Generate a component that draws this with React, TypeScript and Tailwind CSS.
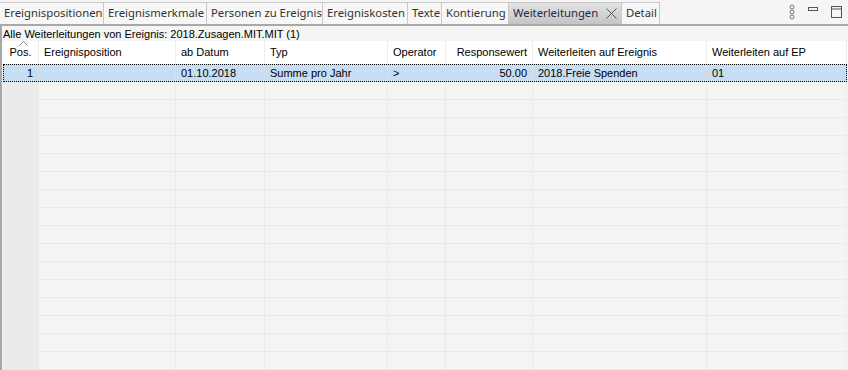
import React from 'react'

const tabs = [
  { label: 'Ereignispositionen', w: 104 },
  { label: 'Ereignismerkmale', w: 103 },
  { label: 'Personen zu Ereignis', w: 116 },
  { label: 'Ereigniskosten', w: 85 },
  { label: 'Texte', w: 34 },
  { label: 'Kontierung', w: 67 },
  { label: 'Weiterleitungen', w: 113, active: true },
  { label: 'Detail', w: 38 },
]

const cols = [
  { label: 'Pos.', w: 36, align: 'center' },
  { label: 'Ereignisposition', w: 137 },
  { label: 'ab Datum', w: 89 },
  { label: 'Typ', w: 123 },
  { label: 'Operator', w: 58 },
  { label: 'Responsewert', w: 87, align: 'right' },
  { label: 'Weiterleiten auf Ereignis', w: 174 },
  { label: 'Weiterleiten auf EP', w: 140 },
]

const row = ['1', '', '01.10.2018', 'Summe pro Jahr', '>', '50.00', '2018.Freie Spenden', '01']

export default function App() {
  return (
    <div className="w-[848px] h-[370px] overflow-hidden bg-[#f5f5f3] flex flex-col" style={{ fontFamily: '"Liberation Sans", Arial, sans-serif' }}>
      {/* tab bar */}
      <div className="h-[24px] bg-[#f5f5f5] flex items-end relative shrink-0">
        {tabs.map(t => (
          <div
            key={t.label}
            style={{ width: t.w, fontFamily: '"Noto Sans", sans-serif' }}
            className={
              'h-[22px] flex items-center pl-[4px] text-[11.3px] border-r border-t border-[#c9c9c9] whitespace-nowrap overflow-hidden shrink-0 ' +
              (t.active ? 'bg-gradient-to-b from-[#e4e4e4] to-[#c4c4c4] text-[#1c2a4a]' : 'bg-[#f7f7f7] text-[#333]')
            }
          >
            {t.label}
            {t.active && (
              <svg width="11" height="11" viewBox="0 0 11 11" className="ml-[8px] shrink-0">
                <path d="M0.5 0.5 L10.5 10.5 M10.5 0.5 L0.5 10.5" stroke="#555" strokeWidth="1" />
              </svg>
            )}
          </div>
        ))}
        <div className="absolute right-0 top-[4px] flex items-center gap-[13px] pr-[6px]">
          <svg width="6" height="16" viewBox="0 0 6 16">
            <circle cx="3" cy="3" r="2" fill="none" stroke="#777" />
            <circle cx="3" cy="8" r="2" fill="none" stroke="#777" />
            <circle cx="3" cy="13" r="2" fill="none" stroke="#777" />
          </svg>
          <svg width="10" height="10" viewBox="0 0 10 10">
            <rect x="0.5" y="0.5" width="9" height="3" fill="none" stroke="#555" />
          </svg>
          <svg width="11" height="12" viewBox="0 0 11 12">
            <rect x="0.5" y="0.5" width="10" height="11" fill="none" stroke="#555" />
            <line x1="0" y1="3" x2="11" y2="3" stroke="#555" />
          </svg>
        </div>
      </div>
      <div className="h-[2px] bg-[#a8a8a8] shrink-0" />

      <div className="flex flex-1 min-h-0">
        <div className="w-[2px] bg-[#a8a8a8] shrink-0" />
        <div className="flex-1 pl-[1px] flex flex-col min-w-0">
          <div className="h-[15px] text-[11px] leading-[14px] text-black -ml-[1px] pl-[1px] pt-[1px]">
            Alle Weiterleitungen von Ereignis: 2018.Zusagen.MIT.MIT (1)
          </div>
          {/* header */}
          <div className="flex h-[23px] bg-white relative shrink-0">
            {cols.map((c, i) => (
              <div
                key={c.label}
                style={{ width: c.w }}
                className={
                  'h-full border-r border-[#ececec] text-[11px] text-black flex items-center px-[5px] shrink-0 ' +
                  (c.align === 'right' ? 'justify-end' : c.align === 'center' ? 'justify-center' : '')
                }
              >
                {i === 0 && (
                  <svg width="9" height="5" viewBox="0 0 9 5" className="absolute left-[16px] top-[0px]">
                    <path d="M0.5 4.5 L4.5 0.5 L8.5 4.5" fill="none" stroke="#888" />
                  </svg>
                )}
                {c.label}
              </div>
            ))}
          </div>
          {/* selected row */}
          <div className="flex h-[18px] bg-[#c6ddf3] border border-dotted border-black w-[844px] shrink-0">
            {row.map((v, i) => (
              <div
                key={i}
                style={{ width: cols[i].w - (i === 0 || i === 7 ? 1 : 0) }}
                className={
                  'h-full border-r border-dotted border-[#e2e2e2] text-[11px] text-black flex items-center px-[5px] whitespace-nowrap shrink-0 ' +
                  (i === 0 || i === 5 ? 'justify-end' : '')
                }
              >
                {v}
              </div>
            ))}
          </div>
          {/* empty rows */}
          {Array.from({ length: 16 }).map((_, r) => (
            <div key={r} className="flex h-[18px] shrink-0">
              {cols.map((c, i) => (
                <div
                  key={i}
                  style={{ width: c.w }}
                  className={
                    'h-full border-r border-b border-[#e9e9e7] shrink-0 ' + (i === 0 ? 'bg-[#ebebeb]' : 'bg-[#f4f4f2]')
                  }
                />
              ))}
            </div>
          ))}
        </div>
      </div>
    </div>
  )
}
